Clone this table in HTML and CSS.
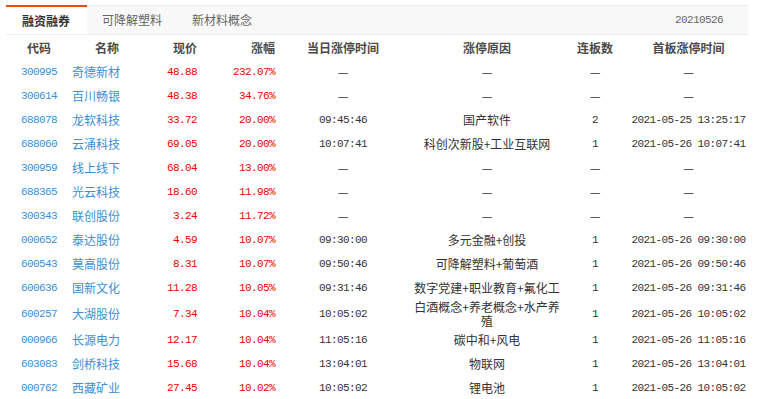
FILE: index.html
```html
<!DOCTYPE html>
<html lang="zh-CN">
<head>
<meta charset="utf-8">
<title>融资融券</title>
<link rel="stylesheet" href="styles.css">
</head>
<body>
<div class="panel">
  <div class="tabs">
    <div class="tab active">融资融券</div>
    <div class="tab">可降解塑料</div>
    <div class="tab">新材料概念</div>
    <div class="date num">20210526</div>
  </div>
  <table class="grid">
    <colgroup>
      <col class="c1"><col class="c2"><col class="c3"><col class="c4"><col class="c5"><col class="c6"><col class="c7"><col class="c8">
    </colgroup>
    <thead>
      <tr>
        <th class="ctr">代码</th><th class="rt">名称</th><th class="rt">现价</th><th class="rt">涨幅</th><th class="ctr">当日涨停时间</th><th class="ctr">涨停原因</th><th class="ctr">连板数</th><th class="ctr">首板涨停时间</th>
      </tr>
    </thead>
    <tbody>
      <tr><td class="ctr code num">300995</td><td class="name">奇德新材</td><td class="rt up num">48.88</td><td class="rt up num">232.07%</td><td class="ctr dash">—</td><td class="ctr dash">—</td><td class="ctr dash">—</td><td class="ctr dash">—</td></tr>
      <tr><td class="ctr code num">300614</td><td class="name">百川畅银</td><td class="rt up num">48.38</td><td class="rt up num">34.76%</td><td class="ctr dash">—</td><td class="ctr dash">—</td><td class="ctr dash">—</td><td class="ctr dash">—</td></tr>
      <tr><td class="ctr code num">688078</td><td class="name">龙软科技</td><td class="rt up num">33.72</td><td class="rt up num">20.00%</td><td class="ctr num">09:45:46</td><td class="ctr reason">国产软件</td><td class="ctr num">2</td><td class="ctr num">2021-05-25 13:25:17</td></tr>
      <tr><td class="ctr code num">688060</td><td class="name">云涌科技</td><td class="rt up num">69.05</td><td class="rt up num">20.00%</td><td class="ctr num">10:07:41</td><td class="ctr reason">科创次新股+工业互联网</td><td class="ctr num">1</td><td class="ctr num">2021-05-26 10:07:41</td></tr>
      <tr><td class="ctr code num">300959</td><td class="name">线上线下</td><td class="rt up num">68.04</td><td class="rt up num">13.00%</td><td class="ctr dash">—</td><td class="ctr dash">—</td><td class="ctr dash">—</td><td class="ctr dash">—</td></tr>
      <tr><td class="ctr code num">688365</td><td class="name">光云科技</td><td class="rt up num">18.60</td><td class="rt up num">11.98%</td><td class="ctr dash">—</td><td class="ctr dash">—</td><td class="ctr dash">—</td><td class="ctr dash">—</td></tr>
      <tr><td class="ctr code num">300343</td><td class="name">联创股份</td><td class="rt up num">3.24</td><td class="rt up num">11.72%</td><td class="ctr dash">—</td><td class="ctr dash">—</td><td class="ctr dash">—</td><td class="ctr dash">—</td></tr>
      <tr><td class="ctr code num">000652</td><td class="name">泰达股份</td><td class="rt up num">4.59</td><td class="rt up num">10.07%</td><td class="ctr num">09:30:00</td><td class="ctr reason">多元金融+创投</td><td class="ctr num">1</td><td class="ctr num">2021-05-26 09:30:00</td></tr>
      <tr><td class="ctr code num">600543</td><td class="name">莫高股份</td><td class="rt up num">8.31</td><td class="rt up num">10.07%</td><td class="ctr num">09:50:46</td><td class="ctr reason">可降解塑料+葡萄酒</td><td class="ctr num">1</td><td class="ctr num">2021-05-26 09:50:46</td></tr>
      <tr><td class="ctr code num">600636</td><td class="name">国新文化</td><td class="rt up num">11.28</td><td class="rt up num">10.05%</td><td class="ctr num">09:31:46</td><td class="ctr reason">数字党建+职业教育+氟化工</td><td class="ctr num">1</td><td class="ctr num">2021-05-26 09:31:46</td></tr>
      <tr><td class="ctr code num">600257</td><td class="name">大湖股份</td><td class="rt up num">7.34</td><td class="rt up num">10.04%</td><td class="ctr num">10:05:02</td><td class="ctr reason">白酒概念+养老概念+水产养殖</td><td class="ctr num">1</td><td class="ctr num">2021-05-26 10:05:02</td></tr>
      <tr><td class="ctr code num">000966</td><td class="name">长源电力</td><td class="rt up num">12.17</td><td class="rt up num">10.04%</td><td class="ctr num">11:05:16</td><td class="ctr reason">碳中和+风电</td><td class="ctr num">1</td><td class="ctr num">2021-05-26 11:05:16</td></tr>
      <tr><td class="ctr code num">603083</td><td class="name">剑桥科技</td><td class="rt up num">15.68</td><td class="rt up num">10.04%</td><td class="ctr num">13:04:01</td><td class="ctr reason">物联网</td><td class="ctr num">1</td><td class="ctr num">2021-05-26 13:04:01</td></tr>
      <tr><td class="ctr code num">000762</td><td class="name">西藏矿业</td><td class="rt up num">27.45</td><td class="rt up num">10.02%</td><td class="ctr num">10:05:02</td><td class="ctr reason">锂电池</td><td class="ctr num">1</td><td class="ctr num">2021-05-26 10:05:02</td></tr>
    </tbody>
  </table>
</div>
</body>
</html>
```

FILE: styles.css
```css
html, body {
  margin: 0;
  padding: 0;
  background: #fff;
}
body {
  font-family: "Noto Sans CJK SC", "Liberation Sans", sans-serif;
  font-size: 12px;
  color: #333;
}
.panel {
  padding: 5px 0 0 6px;
}
.tabs {
  display: flex;
  align-items: stretch;
  width: 742px;
  height: 28px;
  background: #f8f8f8;
  border-top: 1px solid #eeeeee;
  border-bottom: 1px solid #eeeeee;
  box-sizing: content-box;
}
.tab {
  display: flex;
  align-items: center;
  padding: 0 15px;
  color: #666;
  line-height: 14px;
}
.tab.active {
  margin-top: -1px;
  padding: 0 17px 0 16px;
  background: #fff;
  border-top: 2px solid #f04a14;
  color: #333;
  font-weight: 700;
}
.date {
  margin-left: auto;
  padding-right: 25px;
  display: flex;
  align-items: center;
  color: #666;
}
.num {
  font-family: "Liberation Mono", "DejaVu Sans Mono", monospace;
  font-size: 11px;
  letter-spacing: -0.6px;
}
.grid {
  margin-top: 1px;
  width: 750px;
  table-layout: fixed;
  border-collapse: collapse;
}
.c1 { width: 66px; }
.c2 { width: 53px; }
.c3 { width: 78px; }
.c4 { width: 78px; }
.c5 { width: 124px; }
.c6 { width: 164px; }
.c7 { width: 52px; }
.c8 { width: 135px; }
.grid th,
.grid td {
  height: 24px;
  padding: 0;
  line-height: 14px;
  vertical-align: middle;
  white-space: nowrap;
}
.grid th {
  font-weight: 700;
  color: #4a4a4a;
}
.grid .rt {
  text-align: right;
  padding-right: 6px;
}
.grid .ctr {
  text-align: center;
}
.grid .name {
  text-align: left;
  color: #3a8fd4;
}
.code {
  color: #3a8fd4;
}
.up {
  color: #f00000;
}
.grid .reason {
  white-space: normal;
  padding: 0 5px;
}
.dash {
  color: #333;
}
```
